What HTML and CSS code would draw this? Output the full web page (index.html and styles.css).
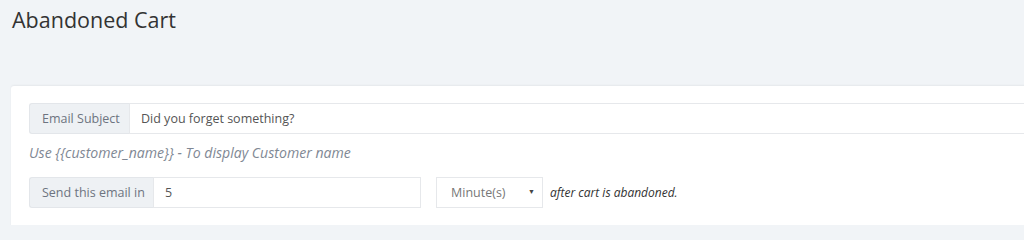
FILE: index.html
```html
<!DOCTYPE html>
<html>
<head>
<meta charset="utf-8">
<link rel="stylesheet" href="styles.css">
</head>
<body>
<div class="page">
  <h1 class="title">Abandoned Cart</h1>
  <div class="card">
    <div class="group group-subject">
      <span class="addon addon-subject">Email Subject</span>
      <div class="field field-wide">Did you forget something?</div>
    </div>
    <p class="hint">Use {{customer_name}} - To display Customer name</p>
    <div class="row">
      <div class="group group-send">
        <span class="addon addon-send">Send this email in</span>
        <div class="field field-num">5</div>
      </div>
      <div class="select">
        <span>Minute(s)</span>
        <span class="caret">▼</span>
      </div>
      <span class="after">after cart is abandoned.</span>
    </div>
  </div>
</div>
</body>
</html>
```
FILE: styles.css
```css
html, body {
  margin: 0;
  padding: 0;
  background: #f1f4f7;
  font-family: "Open Sans", "Liberation Sans", sans-serif;
}
.page {
  height: 225px;
  overflow: hidden;
  padding: 0 0 0 11px;
}
.title {
  margin: 0;
  padding: 5px 0 0 1px;
  height: 86px;
  box-sizing: border-box;
  font-size: 21.5px;
  font-weight: 400;
  color: #333;
  line-height: 30px;
}
.card {
  background: #fff;
  border-radius: 3px;
  box-shadow: 0 -1px 2px rgba(0,0,0,0.05);
  padding: 17px 0 20px 18px;
  margin-right: -30px;
  height: 160px;
  box-sizing: border-box;
}
.group {
  display: flex;
  height: 31px;
  box-sizing: border-box;
}
.addon {
  display: flex;
  align-items: center;
  padding: 0 12px;
  background: #eef1f4;
  border: 1px solid #e3e6ea;
  border-right: none;
  border-radius: 3px 0 0 3px;
  font-size: 12.5px;
  color: #6d7480;
  box-sizing: border-box;
  white-space: nowrap;
}
.addon-subject { width: 100px; }
.addon-send { width: 124px; }
.field {
  display: flex;
  align-items: center;
  padding: 0 11px;
  border: 1px solid #e6e8eb;
  font-size: 12.5px;
  color: #555;
  box-sizing: border-box;
  background: #fff;
  white-space: nowrap;
}
.field-wide { flex: 1; }
.field-num { width: 268px; }
.hint {
  margin: 0;
  padding: 0;
  height: 43px;
  line-height: 38px;
  font-size: 14.1px;
  font-style: italic;
  color: #7f8894;
}
.row {
  display: flex;
  align-items: center;
}
.select {
  margin-left: 15px;
  width: 107px;
  height: 31px;
  box-sizing: border-box;
  border: 1px solid #e6e8eb;
  display: flex;
  align-items: center;
  justify-content: space-between;
  padding: 0 7px 0 14px;
  font-size: 12.5px;
  color: #777;
}
.caret {
  font-size: 7px;
  color: #444;
  margin-top: -2px;
}
.after {
  margin-left: 7px;
  font-size: 12px;
  font-style: italic;
  color: #333;
}
```
